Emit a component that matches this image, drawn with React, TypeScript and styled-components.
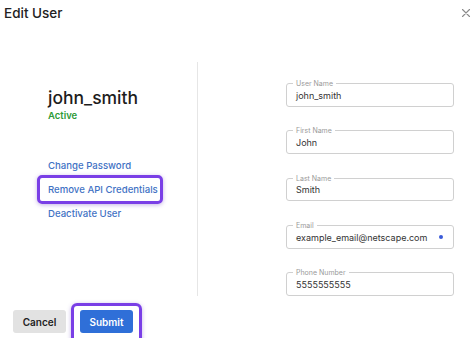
import React from "react";
import styled, { createGlobalStyle } from "styled-components";

const GlobalStyle = createGlobalStyle`
  html, body {
    margin: 0;
    padding: 0;
    background: #ffffff;
  }
  body {
    font-family: Inter, "Noto Sans", sans-serif;
    color: #222;
  }
`;

const Dialog = styled.div`
  width: 474px;
  height: 338px;
  display: flex;
  flex-direction: column;
  overflow: hidden;
  background: #fff;
`;

const Header = styled.div`
  flex-shrink: 0;
  height: 24px;
  display: flex;
  align-items: center;
  justify-content: space-between;
  padding: 1px 3px 0 4px;
`;

const Title = styled.h1`
  margin: 0;
  font-size: 13.5px;
  font-weight: 500;
  color: #222;
`;

const CloseButton = styled.button`
  border: none;
  background: none;
  padding: 0;
  display: flex;
  color: #8a8a8a;
  cursor: pointer;
`;

const Body = styled.div`
  flex-shrink: 0;
  margin-top: 37px;
  display: flex;
  height: 234px;
`;

const LeftColumn = styled.div`
  width: 197px;
  padding: 25px 0 0 48px;
  box-sizing: border-box;
  display: flex;
  flex-direction: column;
`;

const Divider = styled.div`
  width: 1px;
  background: #e6e6e6;
`;

const RightColumn = styled.div`
  flex: 1;
  padding: 21px 0 0 88px;
  display: flex;
  flex-direction: column;
  gap: 23.5px;
`;

const UserName = styled.div`
  font-size: 17.5px;
  font-weight: 500;
  line-height: 22px;
  color: #1d1d1d;
`;

const Status = styled.div`
  font-size: 9.5px;
  font-weight: 600;
  color: #2e9a36;
  line-height: 12px;
  margin-top: 1px;
`;

const Actions = styled.div`
  margin-top: 37px;
  display: flex;
  flex-direction: column;
  gap: 11px;
`;

const ActionLink = styled.a`
  font-size: 9.6px;
  font-weight: 500;
  line-height: 13px;
  color: #3f72c4;
  text-decoration: none;
  cursor: pointer;
`;

const Highlight = styled.div`
  margin: -8px -5px -8px -11px;
  padding: 5px 2px 5px 8px;
  border: 3px solid #7a3fe6;
  border-radius: 5px;
  box-shadow: 0 1px 4px rgba(90, 40, 180, 0.35);
  align-self: flex-start;
  display: flex;
`;

const FieldBox = styled.div`
  position: relative;
  width: 168px;
  height: 24px;
  box-sizing: border-box;
  border: 1px solid #d0d0d0;
  border-radius: 3px;
  padding: 0 9px;
  display: flex;
  align-items: center;
`;

const FieldLabel = styled.span`
  position: absolute;
  top: -5px;
  left: 6px;
  padding: 0 3px;
  background: #fff;
  font-size: 7px;
  line-height: 9px;
  color: #9a9a9a;
`;

const FieldValue = styled.span`
  font-size: 9px;
  color: #333;
  padding-top: 1px;
`;

const FocusDot = styled.span`
  width: 4px;
  height: 4px;
  border-radius: 50%;
  background: #3a5ad8;
  margin: 0 1px 0 auto;
`;

const Footer = styled.div`
  flex-shrink: 0;
  display: flex;
  align-items: flex-start;
  padding: 14px 0 0 13px;
  gap: 14px;
`;

const Button = styled.button<{ primary?: boolean }>`
  width: 53px;
  height: 23px;
  border: none;
  border-radius: 3px;
  font-family: Inter, "Noto Sans", sans-serif;
  font-size: 10px;
  font-weight: 600;
  background: ${({ primary }) => (primary ? "#2f6fd8" : "#e2e2e2")};
  color: ${({ primary }) => (primary ? "#ffffff" : "#222")};
  cursor: pointer;
`;

const ButtonHighlight = styled.div`
  margin: -7px -9px 0 -9px;
  padding: 4px 6px 10px 6px;
  border: 3px solid #7a3fe6;
  border-radius: 6px;
  box-shadow: 0 1px 4px rgba(90, 40, 180, 0.35);
  display: flex;
`;

interface FieldProps {
  label: string;
  value: string;
  focused?: boolean;
}

const Field: React.FC<FieldProps> = ({ label, value, focused = false }) => (
  <FieldBox>
    <FieldLabel>{label}</FieldLabel>
    <FieldValue>{value}</FieldValue>
    {focused && <FocusDot />}
  </FieldBox>
);

const App: React.FC = () => {
  return (
    <>
      <GlobalStyle />
      <Dialog>
        <Header>
          <Title>Edit User</Title>
          <CloseButton aria-label="Close">
            <svg width="10" height="10" viewBox="0 0 10 10">
              <path
                d="M1.5 1.5 L8.5 8.5 M8.5 1.5 L1.5 8.5"
                stroke="currentColor"
                strokeWidth="1.1"
                strokeLinecap="round"
              />
            </svg>
          </CloseButton>
        </Header>
        <Body>
          <LeftColumn>
            <UserName>john_smith</UserName>
            <Status>Active</Status>
            <Actions>
              <ActionLink>Change Password</ActionLink>
              <Highlight>
                <ActionLink>Remove API Credentials</ActionLink>
              </Highlight>
              <ActionLink>Deactivate User</ActionLink>
            </Actions>
          </LeftColumn>
          <Divider />
          <RightColumn>
            <Field label="User Name" value="john_smith" />
            <Field label="First Name" value="John" />
            <Field label="Last Name" value="Smith" />
            <Field label="Email" value="example_email@netscape.com" focused />
            <Field label="Phone Number" value="5555555555" />
          </RightColumn>
        </Body>
        <Footer>
          <Button>Cancel</Button>
          <ButtonHighlight>
            <Button primary>Submit</Button>
          </ButtonHighlight>
        </Footer>
      </Dialog>
    </>
  );
};

export default App;
